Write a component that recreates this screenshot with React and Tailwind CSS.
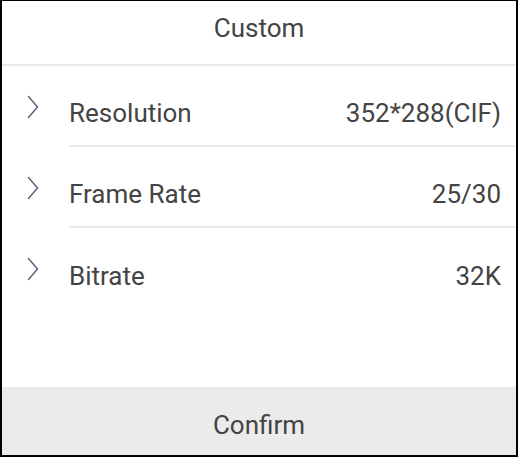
import { useState } from 'react'

const ROWS = [
  { label: 'Resolution', value: '352*288(CIF)' },
  { label: 'Frame Rate', value: '25/30' },
  { label: 'Bitrate', value: '32K' },
]

function Chevron() {
  return (
    <svg width="12" height="24" viewBox="0 0 12 24" fill="none" className="shrink-0">
      <path d="M1.5 1.5 L10.5 12 L1.5 22.5" stroke="#5b6579" strokeWidth="1.5" strokeLinecap="round" strokeLinejoin="round" />
    </svg>
  )
}

export default function App() {
  const [rows] = useState(ROWS)

  return (
    <div
      className="w-[518px] h-[457px] bg-white border-black border-t border-l-2 border-r-2 border-b-2 flex flex-col text-[#444444]"
      style={{ fontFamily: 'Roboto, "Noto Sans", sans-serif' }}
    >
      <div className="h-[65px] flex items-center justify-center pb-[8px] text-[26px] border-b-2 border-[#ebebeb]">
        Custom
      </div>

      <div className="flex-1 flex flex-col">
        {rows.map((row, i) => (
          <div key={row.label} className="flex h-[81px]">
            <div className="w-[67px] flex items-center pl-[25px] pt-[1px]">
              <Chevron />
            </div>
            <div
              className={`flex-1 flex items-center justify-between pt-[16px] pr-[15px] text-[26px] ${
                i < rows.length - 1 ? 'border-b-2 border-[#ebebeb]' : ''
              }`}
            >
              <span>{row.label}</span>
              <span>{row.value}</span>
            </div>
          </div>
        ))}
      </div>

      <button className="h-[68px] bg-[#ebebeb] flex items-center justify-center pt-[8px] text-[26px] text-[#444444]">
        Confirm
      </button>
    </div>
  )
}
